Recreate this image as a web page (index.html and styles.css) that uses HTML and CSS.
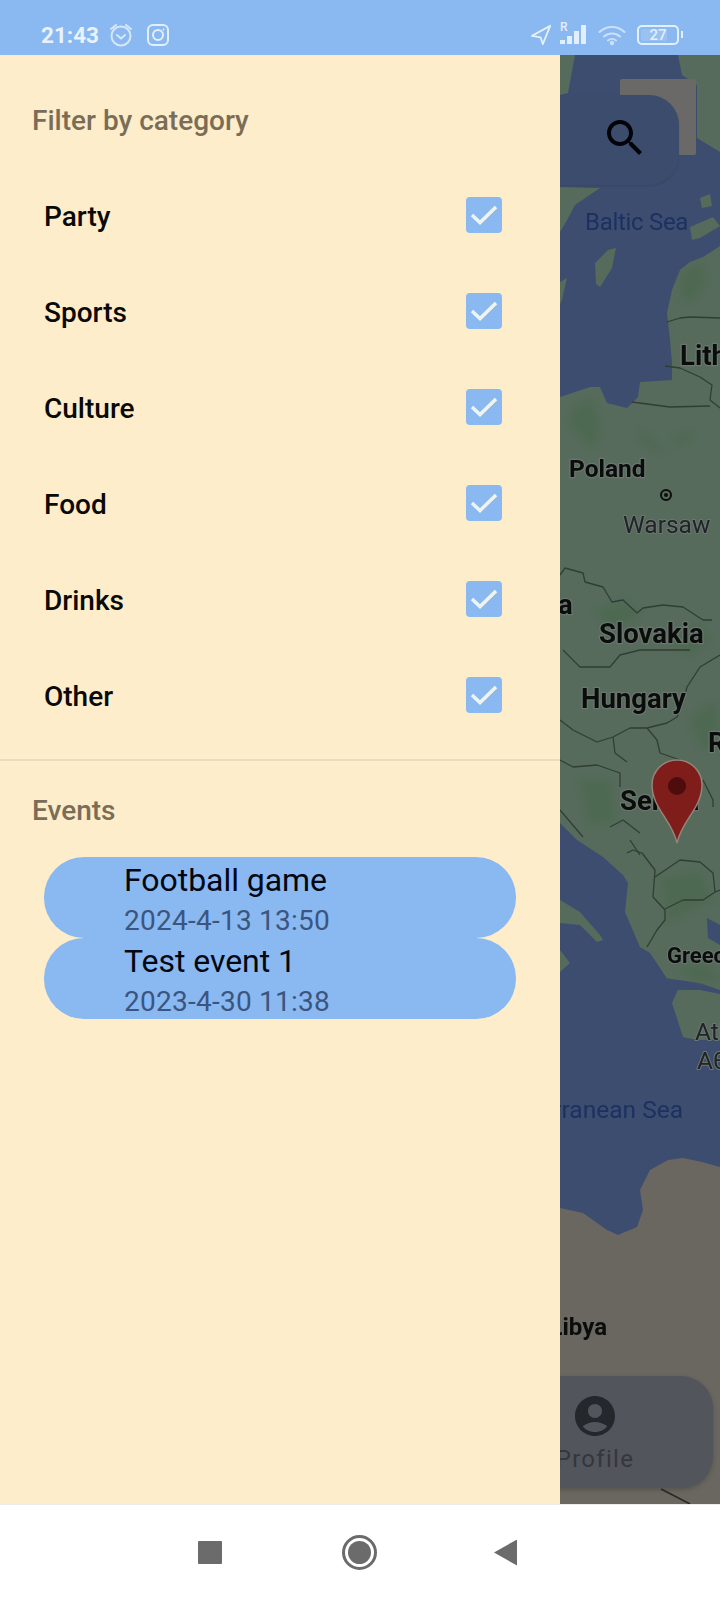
FILE: index.html
```html
<!DOCTYPE html>
<html lang="en">
<head>
<meta charset="utf-8">
<title>Event map</title>
<link rel="stylesheet" href="styles.css">
</head>
<body>
<div class="screen">
  <header class="status">
    <span class="time">21:43</span>
    <svg class="ic-alarm" width="26" height="26" viewBox="0 0 26 26"><circle cx="13" cy="14" r="9.5"/><path d="M9 13l4 3.5 4-3.5M3 7l5-4M23 7l-5-4"/></svg>
    <svg class="ic-insta" width="24" height="24" viewBox="0 0 24 24"><rect x="2" y="2" width="20" height="20" rx="5"/><circle cx="12" cy="12" r="5"/><circle class="fill" cx="17.5" cy="6.5" r="1"/></svg>
    <span class="status-right">
      <svg class="ic-loc" width="22" height="22" viewBox="0 0 24 24"><path d="M2 13L22 2 14 22 11.500 14.500z"/></svg>
      <span class="signal">
        <span class="roam">R</span>
        <svg width="27" height="20" viewBox="0 0 27 20"><rect x="0" y="15" width="5" height="4"/><rect x="7" y="11" width="5" height="8"/><rect x="14" y="6" width="5" height="13"/><rect x="21" y="0" width="5" height="19"/></svg>
      </span>
      <svg class="ic-wifi" width="28" height="22" viewBox="0 0 28 22"><path d="M1.500 8a18 18 0 0 1 25 0M6 12.500a12 12 0 0 1 16 0M10 16.500a6 6 0 0 1 8 0"/><circle class="fill" cx="14" cy="19" r="2.200"/></svg>
      <span class="battery"><span class="battery-fill"></span><span class="battery-num">27</span></span>
      <span class="battery-nub"></span>
    </span>
  </header>

  <main class="stage">
    <div class="map">
      <svg class="map-art" width="720" height="1449" viewBox="0 55 720 1449">
        <rect class="sea" x="0" y="55" width="720" height="1449"/>
        <path class="africa" d="M540 1205L560 1208 583 1213 607 1230 618 1235 637 1227 643 1210 640 1190 650 1170 668 1160 683 1158 702 1162 720 1167V1504H540Z"/>
        <path class="road" d="M661 1489L690 1504"/>
        <path class="land" d="M560 55H575L568 93 560 95Z"/>
        <path class="land" d="M678 55H720V152L697 138V85L682 75Z"/>
        <path class="land" d="M560 187L600 188 575 205 566 222 560 232Z"/>
        <path class="land" d="M690 227L713 217 720 226 700 238 692 240Z"/>
        <path class="land" d="M700 198L710 194 712 206 702 208Z"/>
        <path class="land" d="M595 263L608 250 616 248 612 268 600 287 596 284Z"/>
        <path class="land" d="M560 282L567 278 562 300 560 304Z"/>
        <path class="land" d="M720 246L703 257 690 262 680 270 672 290 667 313 670 340 672 363 672 380 640 382 638 397 627 408 607 403 600 387 590 387 560 397V823L577 840 603 857 623 875 628 883 625 912 640 947 650 953 668 980 680 985 672 1003 683 1037 697 1040 720 1040Z"/>
        <path class="land" d="M560 900L580 912 600 935 603 940 597 942 580 925 560 923Z"/>
        <path class="land" d="M560 950L570 963 560 972Z"/>
        <path class="sea" d="M707 918L720 925V945L708 938Z"/>
        <path class="sea" d="M664 978L700 983 720 990V994L700 990 672 990Z"/>
        <path class="forest" d="M572 410L590 400 600 420 598 440 590 447 570 425Z"/>
        <path class="forest" d="M680 275L700 262 706 280 694 300 682 300Z"/>
        <path class="forest" d="M640 430L652 440 665 450 655 450 640 440Z"/>
        <path class="forest" d="M672 440L690 430 692 438 678 444Z"/>
        <path class="forest" d="M595 610L625 600 640 615 610 630Z"/>
        <path class="forest" d="M665 640L700 625 710 640 690 655Z"/>
        <path class="forest" d="M690 720L715 700 720 750 700 745Z"/>
        <path class="forest" d="M580 780L610 780 615 820 590 825Z"/>
        <path class="forest" d="M660 880L700 870 712 900 670 920Z"/>
        <path class="forest" d="M678 970L705 965 720 980 700 982Z"/>
        <path class="border" d="M560 575L565 568 583 573 585 582 603 587 612 602 623 600 637 613 643 608 663 605 683 607 703 620 712 620"/>
        <path class="border" d="M563 650L580 667 610 667 620 655 640 650 677 650 690 650M720 655L700 667 687 687 683 703 677 717 667 723 647 728 630 728 613 737 597 742 573 730 560 720"/>
        <path class="border" d="M613 737L615 753 627 762M647 728L657 740 660 753 680 760M560 760L573 767 597 765 620 773 620 787"/>
        <path class="border" d="M560 810L583 837M610 827L623 820 640 833M703 780L713 800 713 807M630 840L640 855"/>
        <path class="border" d="M627 853L633 850 642 853 655 870 653 897 665 910 665 920 657 930 647 947M655 877L680 860 700 862 713 873 715 892 703 900 683 900 665 909M715 892L720 890"/>
        <path class="border" d="M667 322L680 318 690 317 720 318M665 366L680 368 700 377 712 385 710 400 720 408M632 402L670 407 710 406"/>
        <text class="lbl-sea" x="585" y="230">Baltic Sea</text>
        <text class="lbl-bold" x="680" y="365">Lith</text>
        <text class="lbl-med" x="569" y="477">Poland</text>
        <text class="lbl-reg" x="623" y="533">Warsaw</text>
        <circle class="city" cx="666" cy="495" r="5"/>
        <circle class="city-dot" cx="666" cy="495" r="2"/>
        <text class="lbl-bold" x="558" y="614">a</text>
        <text class="lbl-bold" x="599" y="643">Slovakia</text>
        <text class="lbl-bold" x="581" y="708">Hungary</text>
        <text class="lbl-bold" x="708" y="752">R</text>
        <text class="lbl-bold" x="620" y="810">Serbia</text>
        <text class="lbl-small" x="667" y="963">Greece</text>
        <text class="lbl-reg" x="695" y="1040">Ati</text>
        <text class="lbl-reg" x="697" y="1069">Αθ</text>
        <text class="lbl-med-sea" x="683" y="1118" text-anchor="end">Mediterranean Sea</text>
        <text class="lbl-libya" x="607" y="1335" text-anchor="end">Libya</text>
        <path class="pin" d="M677 843C672 820 652 808 652 785a25 25 0 0 1 50 0C702 808 682 820 677 843Z"/>
        <circle class="pin-dot" cx="677" cy="786" r="9"/>
      </svg>
      <div class="ghost-tile"></div>
      <button class="search-btn" type="button">
        <svg width="48" height="48" viewBox="0 0 24 24"><path d="M15.500 14h-.79l-.28-.27C15.410 12.590 16 11.110 16 9.500 16 5.910 13.090 3 9.500 3S3 5.910 3 9.500 5.910 16 9.500 16c1.610 0 3.090-.59 4.230-1.570l.27.280v.79l5 4.990L20.490 19l-4.990-5zm-6 0C7.010 14 5 11.990 5 9.500S7.010 5 9.500 5 14 7.010 14 9.500 11.990 14 9.500 14z"/></svg>
      </button>
      <div class="profile-tab">
        <svg width="48" height="48" viewBox="0 0 24 24"><path d="M12 2C6.480 2 2 6.480 2 12s4.480 10 10 10 10-4.480 10-10S17.520 2 12 2zm0 4c1.930 0 3.500 1.570 3.500 3.500S13.930 13 12 13s-3.500-1.570-3.500-3.500S10.070 6 12 6zm0 14c-2.030 0-4.430-.82-6.140-2.880C7.550 15.800 9.680 15 12 15s4.450.8 6.140 2.120C16.430 19.180 14.030 20 12 20z"/></svg>
        <span class="profile-label">Profile</span>
      </div>
    </div>

    <aside class="drawer">
      <h2 class="section-title title-filter">Filter by category</h2>
      <ul class="cats">
        <li class="cat"><span>Party</span><span class="check"><svg width="26" height="20" viewBox="0 0 26 20"><path d="M1 10l8 7.500L25 2"/></svg></span></li>
        <li class="cat"><span>Sports</span><span class="check"><svg width="26" height="20" viewBox="0 0 26 20"><path d="M1 10l8 7.500L25 2"/></svg></span></li>
        <li class="cat"><span>Culture</span><span class="check"><svg width="26" height="20" viewBox="0 0 26 20"><path d="M1 10l8 7.500L25 2"/></svg></span></li>
        <li class="cat"><span>Food</span><span class="check"><svg width="26" height="20" viewBox="0 0 26 20"><path d="M1 10l8 7.500L25 2"/></svg></span></li>
        <li class="cat"><span>Drinks</span><span class="check"><svg width="26" height="20" viewBox="0 0 26 20"><path d="M1 10l8 7.500L25 2"/></svg></span></li>
        <li class="cat"><span>Other</span><span class="check"><svg width="26" height="20" viewBox="0 0 26 20"><path d="M1 10l8 7.500L25 2"/></svg></span></li>
      </ul>
      <hr class="divider">
      <h2 class="section-title title-events">Events</h2>
      <div class="events">
        <div class="event"><div class="event-name">Football game</div><div class="event-date">2024-4-13 13:50</div></div>
        <div class="event"><div class="event-name">Test event 1</div><div class="event-date">2023-4-30 11:38</div></div>
      </div>
    </aside>
  </main>

  <nav class="navbar">
    <span class="nav-square"></span>
    <span class="nav-home"><span class="nav-home-dot"></span></span>
    <span class="nav-back"></span>
  </nav>
</div>
</body>
</html>
```

FILE: styles.css
```css
* { box-sizing: border-box; }
html, body { margin: 0; padding: 0; }
body { width: 720px; height: 1600px; overflow: hidden; background: #fff; font-family: Roboto, "Noto Sans", sans-serif; }
.screen { width: 720px; height: 1600px; display: flex; flex-direction: column; }

.status { height: 55px; flex: none; background: #8ab8f1; display: flex; align-items: center; padding: 14px 0 0 41px; color: #e9f2fd; }
.time { font-size: 22.500px; font-weight: 700; line-height: 26px; }
.status svg { fill: none; stroke: #e4effd; stroke-width: 2; stroke-linecap: round; stroke-linejoin: round; flex: none; }
.status svg .fill { fill: #e4effd; stroke: none; }
.ic-alarm { margin-left: 9px; opacity: .85; }
.ic-insta { margin-left: 12px; }
.status-right { margin-left: auto; margin-right: 37px; display: flex; align-items: center; }
.ic-loc { margin-right: 8px; }
.signal { position: relative; display: block; width: 27px; height: 20px; }
.signal svg { position: absolute; left: 0; top: 0; fill: #e4effd; stroke: none; }
.roam { position: absolute; left: 0; top: -4px; font-size: 12px; line-height: 12px; font-weight: 500; color: #e4effd; }
.ic-wifi { margin-left: 11px; opacity: .72; }
.battery { position: relative; margin-left: 11px; width: 42px; height: 20px; border: 2px solid #e4effd; border-radius: 5px; display: flex; align-items: center; justify-content: center; overflow: hidden; }
.battery-fill { position: absolute; left: 2px; top: 2px; bottom: 2px; width: 26px; background: rgba(255,255,255,.13); border-radius: 2px; }
.battery-num { position: relative; font-size: 15px; line-height: 16px; font-weight: 500; color: #e4effd; }
.battery-nub { width: 2px; height: 7px; margin-left: 2px; background: #e4effd; }

.stage { position: relative; flex: 1; overflow: hidden; }
.map { position: absolute; inset: 0; }
.map-art { display: block; filter: blur(.6px); }
.sea { fill: #3d4d70; }
.africa { fill: #6a6761; }
.land { fill: #566b5b; }
.forest { fill: #4e6952; filter: blur(3px); }
.road { fill: none; stroke: #272725; stroke-width: 1.500; }
.border { fill: none; stroke: #303e35; stroke-width: 1.300; stroke-linejoin: round; }
.map-art text { font-family: Roboto, sans-serif; paint-order: stroke; stroke-linejoin: round; }
.lbl-sea { font-size: 24px; letter-spacing: -.3px; fill: #1d3160; }
.lbl-med-sea { font-size: 24.500px; fill: #1d3160; }
.lbl-bold { font-size: 27.500px; font-weight: 700; fill: #0b0d0d; stroke: #6b776e; stroke-width: 2.500px; }
.lbl-med { font-size: 24.500px; font-weight: 700; fill: #0b0d0d; stroke: #6b776e; stroke-width: 2.500px; }
.lbl-small { font-size: 22px; font-weight: 700; fill: #0b0d0d; stroke: #6b776e; stroke-width: 2px; }
.lbl-libya { font-size: 24px; font-weight: 700; fill: #0b0d0d; }
.lbl-reg { font-size: 24.500px; fill: #20232a; stroke: #6b776e; stroke-width: 2px; }
.city { fill: none; stroke: #0b0d0d; stroke-width: 2; }
.city-dot { fill: #0b0d0d; }
.pin { fill: #7f1d1b; stroke: #93857c; stroke-width: 1.500; }
.pin-dot { fill: #4e0c0c; }

.ghost-tile { position: absolute; left: 620px; top: 24px; width: 76px; height: 76px; background: #6a6967; border-radius: 2px; }
.search-btn { position: absolute; left: 500px; top: 40px; width: 179px; height: 90px; padding: 0 0 4px 101px; border: 0; border-radius: 30px; background: #3b4c6c; box-shadow: 0 1px 2px rgba(30,38,55,.2); display: flex; align-items: center; }
.search-btn svg { fill: #020308; display: block; }
.profile-tab { position: absolute; left: 500px; top: 1321px; width: 213px; height: 112px; padding: 16px 0 0 71px; border-radius: 32px; background: #52555c; box-shadow: 0 2px 4px rgba(40,40,40,.3); }
.profile-tab svg { fill: #24282c; display: block; }
.profile-label { position: absolute; left: 0; width: 190px; top: 68px; text-align: center; font-size: 24px; line-height: 30px; letter-spacing: 1.300px; color: #34373c; }

.drawer { position: absolute; left: 0; top: 0; bottom: 0; width: 560px; background: #fdedcb; }
.section-title { margin: 0; padding-left: 32px; font-size: 28px; line-height: 34px; font-weight: 500; color: #7a6d57; }
.title-filter { padding-top: 49px; height: 113px; }
.cats { list-style: none; margin: 0; padding: 0; }
.cat { height: 96px; padding: 0 58px 0 44px; display: flex; align-items: center; justify-content: space-between; font-size: 28px; font-weight: 500; color: #0a0906; }
.check { width: 36px; height: 36px; margin-top: -2px; border-radius: 4px; background: #8ab8f1; display: flex; align-items: center; justify-content: center; }
.check svg { display: block; fill: none; stroke: #f0f3ee; stroke-width: 3.500; }
.divider { margin: 15px 0 0; height: 2px; border: 0; background: #e8dcbf; }
.title-events { padding-top: 33px; height: 96px; }
.events { padding: 0 44px; }
.event { height: 81px; padding: 3px 0 0 80px; border-radius: 40px; background: #8ab8f1; }
.event-name { font-size: 32px; line-height: 40px; letter-spacing: -.05px; color: #030712; }
.event-date { font-size: 28px; line-height: 42px; letter-spacing: .25px; color: #3a5680; }

.navbar { height: 96px; flex: none; background: #fff; border-top: 1px solid #ececec; display: flex; align-items: center; padding-left: 198px; }
.nav-square { width: 24px; height: 23px; background: #6b6b6b; border-radius: 1px; }
.nav-home { width: 35px; height: 35px; margin-left: 120px; border: 3px solid #6b6b6b; border-radius: 50%; display: flex; align-items: center; justify-content: center; }
.nav-home-dot { width: 23px; height: 23px; border-radius: 50%; background: #6b6b6b; }
.nav-back { width: 23px; height: 26px; margin-left: 117px; background: #6b6b6b; clip-path: polygon(0 50%, 100% 0, 100% 100%); }
```
